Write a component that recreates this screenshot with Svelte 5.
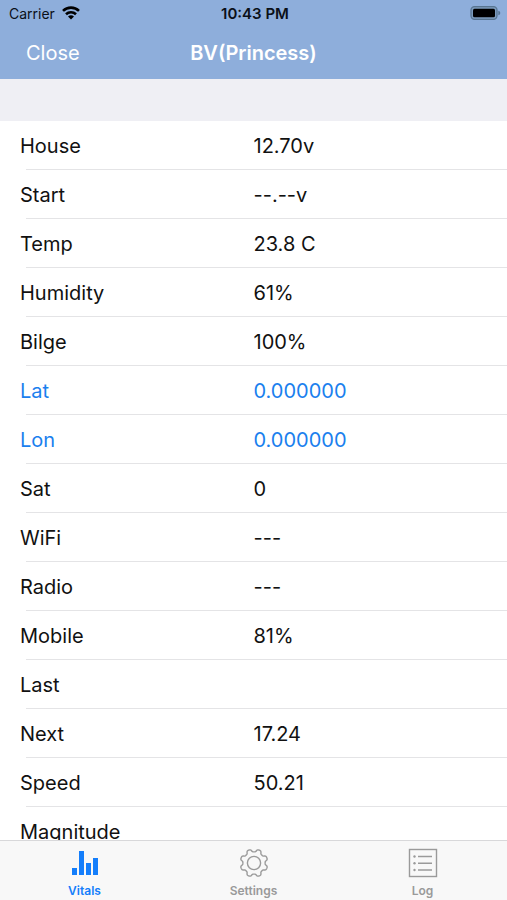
<script>
	let title = 'BV(Princess)';
	let active = $state('Vitals');

	const tabs = ['Vitals', 'Settings', 'Log'];

	const rows = [
		{ name: 'House', value: '12.70v' },
		{ name: 'Start', value: '--.--v' },
		{ name: 'Temp', value: '23.8 C' },
		{ name: 'Humidity', value: '61%' },
		{ name: 'Bilge', value: '100%' },
		{ name: 'Lat', value: '0.000000', link: true },
		{ name: 'Lon', value: '0.000000', link: true },
		{ name: 'Sat', value: '0' },
		{ name: 'WiFi', value: '---' },
		{ name: 'Radio', value: '---' },
		{ name: 'Mobile', value: '81%' },
		{ name: 'Last', value: '' },
		{ name: 'Next', value: '17.24' },
		{ name: 'Speed', value: '50.21' },
		{ name: 'Magnitude', value: '' }
	];

	// outline of the settings gear: eight soft teeth around the centre
	function gear(cx, cy, r, depth) {
		const points = [];
		for (let i = 0; i < 160; i++) {
			const a = (i / 160) * Math.PI * 2;
			const wave = Math.tanh(2 * Math.cos(8 * a + Math.PI)) * depth;
			points.push(`${(cx + (r + wave) * Math.cos(a)).toFixed(2)} ${(cy + (r + wave) * Math.sin(a)).toFixed(2)}`);
		}
		return `M${points.join('L')}Z`;
	}
</script>

<div class="app">
	<header>
		<div class="status">
			<span class="carrier">
				Carrier
				<svg width="18" height="14" viewBox="0 0 18 14" aria-hidden="true">
					<g fill="none" stroke="#000" stroke-width="2.6">
						<path d="M1 4.9a11.5 11.5 0 0 1 16 0" />
						<path d="M4 8.2a7.2 7.2 0 0 1 10 0" />
					</g>
					<path d="M6 10.6a4.4 4.4 0 0 1 6 0L9 13.6z" />
				</svg>
			</span>
			<span class="time">10:43 PM</span>
			<svg class="battery" width="31" height="14" viewBox="0 0 31 14" aria-hidden="true">
				<rect x="1" y="0.7" width="26" height="12.6" rx="3.5" fill="#7c9bbd" stroke="#587591" stroke-width="1.3" />
				<rect x="3" y="2.7" width="22" height="8.6" rx="1.5" />
				<path d="M28.3 4.7q2 .6 2 2.3t-2 2.3z" fill="#587591" />
			</svg>
		</div>
		<div class="bar">
			<button class="close">Close</button>
			<h1>{title}</h1>
		</div>
	</header>

	<main>
		<table>
			<tbody>
				{#each rows as row}
					<tr>
						{#if row.link}
							<th scope="row"><a href="#map">{row.name}</a></th>
							<td><a href="#map">{row.value}</a></td>
						{:else}
							<th scope="row">{row.name}</th>
							<td>{row.value}</td>
						{/if}
					</tr>
				{/each}
			</tbody>
		</table>
	</main>

	<nav>
		{#each tabs as tab}
			<button class="tab" class:active={active === tab} onclick={() => (active = tab)}>
				<svg width="30" height="30" viewBox="0 0 30 30" aria-hidden="true">
					{#if tab === 'Vitals'}
						<g fill="currentColor">
							<rect x="2" y="20" width="5" height="7" />
							<rect x="9" y="3" width="5" height="24" />
							<rect x="16" y="15" width="5" height="12" />
							<rect x="23" y="10" width="5" height="17" />
						</g>
					{:else if tab === 'Settings'}
						<g fill="none" stroke="currentColor" stroke-width="1.4" stroke-linejoin="round">
							<path d={gear(15, 15, 12.5, 1.4)} />
							<circle cx="15" cy="15" r="6.6" />
						</g>
					{:else}
						<g fill="none" stroke="currentColor" stroke-width="1.4">
							<rect x="1.5" y="1.5" width="27" height="27" />
							<path d="M10 8.5h14M10 15.2h14M10 22h14" />
						</g>
						<g fill="currentColor">
							<circle cx="6.5" cy="8.5" r="1.2" />
							<circle cx="6.5" cy="15.2" r="1.2" />
							<circle cx="6.5" cy="22" r="1.2" />
						</g>
					{/if}
				</svg>
				{tab}
			</button>
		{/each}
	</nav>
</div>

<style>
	:global(body) {
		margin: 0;
	}

	.app {
		display: flex;
		flex-direction: column;
		height: 100vh;
		background: #fff;
		color: #111;
		font-family: Inter, Roboto, sans-serif;
	}

	button {
		padding: 0;
		border: 0;
		background: none;
		font: inherit;
		cursor: pointer;
	}

	header {
		background: #8eaedb;
	}

	.status,
	.bar {
		display: grid;
		grid-template-columns: 1fr auto 1fr;
		align-items: center;
	}

	.status {
		height: 26px;
		padding: 0 6px 0 9px;
		color: #0b1018;
		font-size: 14px;
	}

	.carrier {
		display: flex;
		align-items: center;
		gap: 7px;
	}

	.time {
		font-size: 15px;
		font-weight: 600;
	}

	.battery {
		justify-self: end;
	}

	.bar {
		height: 53px;
		padding: 0 26px;
		color: #fff;
		font-size: 20px;
	}

	.close {
		justify-self: start;
		color: #fff;
	}

	h1 {
		margin: 0;
		font-size: 20px;
		font-weight: 600;
	}

	main {
		flex: 1;
		min-height: 0;
		padding-top: 42px;
		overflow-y: auto;
		scrollbar-width: none;
		background: #efeff4;
	}

	table {
		width: 100%;
		table-layout: fixed;
		border-spacing: 0;
		background: #fff;
		font-size: 20px;
		line-height: 24px;
	}

	th,
	td {
		position: relative;
		height: 49px;
		padding: 0;
		text-align: left;
		font-weight: 400;
	}

	th {
		padding-left: 20px;
	}

	th::after,
	td::after {
		content: '';
		position: absolute;
		right: 0;
		bottom: 0;
		left: 0;
		height: 1px;
		background: #e4e4e6;
	}

	th::after {
		left: 26px;
	}

	a {
		color: #1a80ee;
		text-decoration: none;
	}

	nav {
		display: flex;
		height: 59px;
		border-top: 1px solid #d8d8da;
		background: #f8f8f8;
	}

	.tab {
		display: flex;
		flex: 1;
		flex-direction: column;
		align-items: center;
		gap: 4px;
		padding-top: 7px;
		color: #9a9a9a;
		font-size: 12px;
		font-weight: 600;
		line-height: 18px;
	}

	.tab.active {
		color: #147efb;
	}
</style>
